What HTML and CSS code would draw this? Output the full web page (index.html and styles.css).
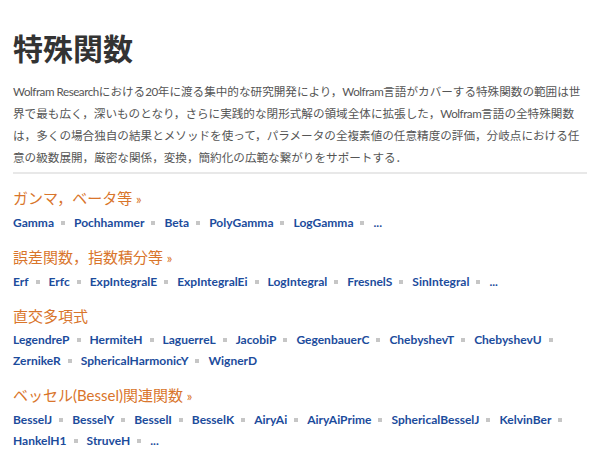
FILE: index.html
```html
<!DOCTYPE html>
<html lang="ja">
<head>
<meta charset="utf-8">
<title>特殊関数</title>
<link rel="stylesheet" href="styles.css">
</head>
<body>
<main class="page">
  <h1 class="title">特殊関数</h1>
  <p class="intro"><span class="en">Wolfram Research</span>における<span class="en">20</span>年に渡る集中的な研究開発により，<span class="en">Wolfram</span>言語がカバーする特殊関数の範囲は世界で最も広く，深いものとなり，さらに実践的な閉形式解の領域全体に拡張した，<span class="en">Wolfram</span>言語の全特殊関数は，多くの場合独自の結果とメソッドを使って，パラメータの全複素値の任意精度の評価，分岐点における任意の級数展開，厳密な関係，変換，簡約化の広範な繋がりをサポートする．</p>
  <hr class="divider">

  <section class="group">
    <h2 class="group-title">ガンマ，ベータ等 <span class="more">»</span></h2>
    <div class="links">
      <span class="item"><a href="#">Gamma</a></span>
      <span class="item"><a href="#">Pochhammer</a></span>
      <span class="item"><a href="#">Beta</a></span>
      <span class="item"><a href="#">PolyGamma</a></span>
      <span class="item"><a href="#">LogGamma</a></span>
      <span class="item last"><a href="#">...</a></span>
    </div>
  </section>

  <section class="group">
    <h2 class="group-title">誤差関数，指数積分等 <span class="more">»</span></h2>
    <div class="links">
      <span class="item"><a href="#">Erf</a></span>
      <span class="item"><a href="#">Erfc</a></span>
      <span class="item"><a href="#">ExpIntegralE</a></span>
      <span class="item"><a href="#">ExpIntegralEi</a></span>
      <span class="item"><a href="#">LogIntegral</a></span>
      <span class="item"><a href="#">FresnelS</a></span>
      <span class="item"><a href="#">SinIntegral</a></span>
      <span class="item last"><a href="#">...</a></span>
    </div>
  </section>

  <section class="group">
    <h2 class="group-title">直交多項式</h2>
    <div class="links">
      <span class="item"><a href="#">LegendreP</a></span>
      <span class="item"><a href="#">HermiteH</a></span>
      <span class="item"><a href="#">LaguerreL</a></span>
      <span class="item"><a href="#">JacobiP</a></span>
      <span class="item"><a href="#">GegenbauerC</a></span>
      <span class="item"><a href="#">ChebyshevT</a></span>
      <span class="item"><a href="#">ChebyshevU</a></span>
      <span class="item"><a href="#">ZernikeR</a></span>
      <span class="item"><a href="#">SphericalHarmonicY</a></span>
      <span class="item last"><a href="#">WignerD</a></span>
    </div>
  </section>

  <section class="group">
    <h2 class="group-title">ベッセル(Bessel)関連関数 <span class="more">»</span></h2>
    <div class="links">
      <span class="item"><a href="#">BesselJ</a></span>
      <span class="item"><a href="#">BesselY</a></span>
      <span class="item"><a href="#">BesselI</a></span>
      <span class="item"><a href="#">BesselK</a></span>
      <span class="item"><a href="#">AiryAi</a></span>
      <span class="item"><a href="#">AiryAiPrime</a></span>
      <span class="item"><a href="#">SphericalBesselJ</a></span>
      <span class="item"><a href="#">KelvinBer</a></span>
      <span class="item"><a href="#">HankelH1</a></span>
      <span class="item"><a href="#">StruveH</a></span>
      <span class="item last"><a href="#">...</a></span>
    </div>
  </section>

  <section class="group">
    <h2 class="group-title">ルジャンドル(Legendre)関連関数 <span class="more">»</span></h2>
  </section>
</main>
</body>
</html>
```

FILE: styles.css
```css
html, body {
  margin: 0;
  padding: 0;
  background: #ffffff;
}

body {
  font-family: Lato, "Noto Sans CJK JP", sans-serif;
  color: #333333;
}

.page {
  padding: 29px 13px 0 13px;
}

.title {
  margin: 0;
  font-family: "Noto Sans CJK JP", sans-serif;
  font-size: 30px;
  line-height: 36px;
  font-weight: 700;
  color: #333333;
}

.intro {
  margin: 16px 0 0 0;
  font-size: 11.6px;
  line-height: 22px;
  color: #555555;
}

.intro .en {
  letter-spacing: -0.45px;
}

.divider {
  margin: 3px 0 0 0;
  border: 0;
  height: 2px;
  background: #e8e8e8;
}

.group {
  margin-top: 12px;
}

.group-title {
  margin: 0 0 1px 0;
  font-size: 15px;
  line-height: 24px;
  font-weight: 400;
  color: #d9752b;
}

.more {
  font-size: 13px;
}

.links {
  display: flex;
  flex-wrap: wrap;
  font-size: 12px;
  line-height: 21px;
  font-weight: 700;
}

.item {
  display: inline-flex;
  align-items: center;
  white-space: nowrap;
}

.item::after {
  content: "";
  display: inline-block;
  width: 4px;
  height: 4px;
  margin: 1px 9px 0 7px;
  background: #c6c6c6;
}

.item.last::after {
  display: none;
}

.item a {
  color: #1c4c9c;
  text-decoration: none;
}
```
